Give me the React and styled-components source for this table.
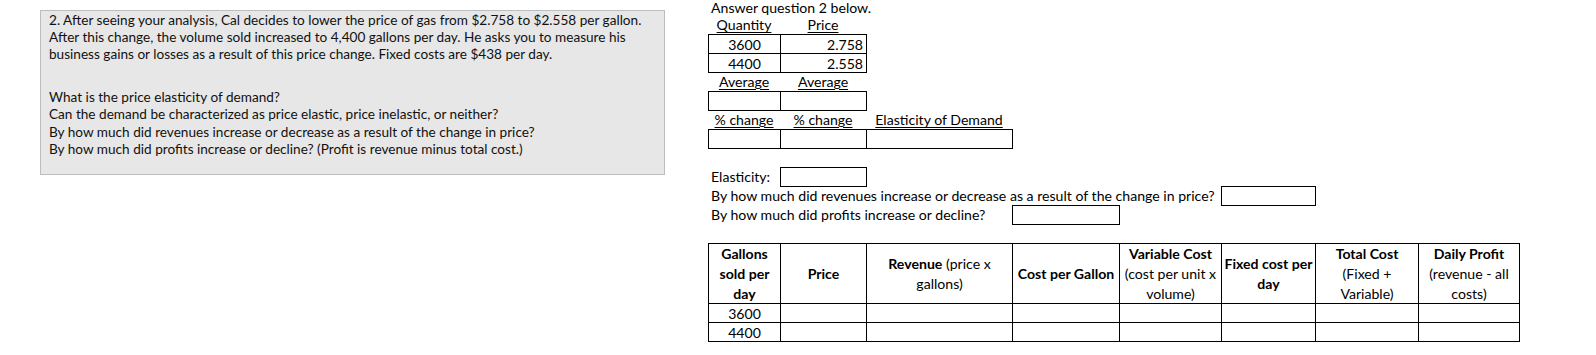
import React from "react";
import styled, { createGlobalStyle, css } from "styled-components";

const Global = createGlobalStyle`
  html, body { margin: 0; padding: 0; background: #fff; }
  body { font-family: Lato, "Liberation Sans", sans-serif; color: #000; }
`;

const Page = styled.div`
  display: flex;
  align-items: flex-start;
  width: 1596px;
  height: 355px;
  overflow: hidden;
`;

const NoteBox = styled.div`
  box-sizing: border-box;
  margin: 10px 0 0 40px;
  width: 625px;
  height: 165px;
  background: #e7e7e7;
  border: 1px solid #bdbdbd;
  padding: 1px 0 0 8px;
  font-size: 13.6px;
  line-height: 17.2px;
  color: #111;
`;

const NoteLine = styled.div`
  white-space: nowrap;
`;

const NoteGap = styled.div`
  height: 25.5px;
`;

const Sheet = styled.div`
  margin-left: 43px;
  display: grid;
  grid-template-columns: 72px 86px 146px 107px 102px 94px 103px 101px;
  grid-template-rows: 15px repeat(12, 19px) 60px 19px 19px;
  font-size: 14.1px;
  line-height: 17px;
`;

const Cell = styled.div`
  grid-column: ${(p) => p.$col} / span ${(p) => p.$span || 1};
  grid-row: ${(p) => p.$row};
  display: flex;
  align-items: ${(p) => (p.$bottom ? "flex-end" : "center")};
  justify-content: ${(p) =>
    p.$align === "right" ? "flex-end" : p.$align === "left" ? "flex-start" : "center"};
  padding: 0 3px;
  white-space: nowrap;
  overflow: visible;
  min-width: 0;
  ${(p) =>
    p.$bottom &&
    css`
      line-height: 14px;
      padding-bottom: 0;
    `}
  ${(p) =>
    p.$boxed &&
    css`
      border: 1px solid #000;
      margin: 0 -1px -1px 0;
    `}
`;

const Under = styled.span`
  text-decoration: underline;
  text-underline-offset: 2px;
  text-decoration-thickness: 1px;
`;

const HeadCell = styled(Cell)`
  flex-direction: column;
  text-align: center;
  line-height: 20px;
  padding: 0 1px;
`;

const HeadLine = styled.div`
  white-space: nowrap;
`;

const Strong = styled.b`
  font-weight: 700;
`;

const noteLines = [
  "2. After seeing your analysis, Cal decides to lower the price of gas from $2.758 to $2.558 per gallon.",
  "After this change, the volume sold increased to 4,400 gallons per day. He asks you to measure his",
  "business gains or losses as a result of this price change. Fixed costs are $438 per day.",
];
const questionLines = [
  "What is the price elasticity of demand?",
  "Can the demand be characterized as price elastic, price inelastic, or neither?",
  "By how much did revenues increase or decrease as a result of the change in price?",
  "By how much did profits increase or decline? (Profit is revenue minus total cost.)",
];

const headers = [
  [<Strong key="a">Gallons</Strong>, <Strong key="b">sold per</Strong>, <Strong key="c">day</Strong>],
  [<Strong key="a">Price</Strong>],
  [<span key="a"><Strong>Revenue</Strong> (price x</span>, <span key="b">gallons)</span>],
  [<Strong key="a">Cost per Gallon</Strong>],
  [<Strong key="a">Variable Cost</Strong>, <span key="b">(cost per unit x</span>, <span key="c">volume)</span>],
  [<Strong key="a">Fixed cost per</Strong>, <Strong key="b">day</Strong>],
  [<Strong key="a">Total Cost</Strong>, <span key="b">(Fixed +</span>, <span key="c">Variable)</span>],
  [<Strong key="a">Daily Profit</Strong>, <span key="b">(revenue - all</span>, <span key="c">costs)</span>],
];

export default function App() {
  return (
    <>
      <Global />
      <Page>
        <NoteBox>
          {noteLines.map((l) => (
            <NoteLine key={l}>{l}</NoteLine>
          ))}
          <NoteGap />
          {questionLines.map((l) => (
            <NoteLine key={l}>{l}</NoteLine>
          ))}
        </NoteBox>

        <Sheet>
          <Cell $col={1} $span={4} $row={1} $align="left" $bottom>
            Answer question 2 below.
          </Cell>

          <Cell $col={1} $row={2}><Under>Quantity</Under></Cell>
          <Cell $col={2} $row={2}><Under>Price</Under></Cell>
          <Cell $col={1} $row={3} $boxed>3600</Cell>
          <Cell $col={2} $row={3} $boxed $align="right">2.758</Cell>
          <Cell $col={1} $row={4} $boxed>4400</Cell>
          <Cell $col={2} $row={4} $boxed $align="right">2.558</Cell>

          <Cell $col={1} $row={5}><Under>Average</Under></Cell>
          <Cell $col={2} $row={5}><Under>Average</Under></Cell>
          <Cell $col={1} $row={6} $boxed />
          <Cell $col={2} $row={6} $boxed />

          <Cell $col={1} $row={7}><Under>% change</Under></Cell>
          <Cell $col={2} $row={7}><Under>% change</Under></Cell>
          <Cell $col={3} $row={7}><Under>Elasticity of Demand</Under></Cell>
          <Cell $col={1} $row={8} $boxed />
          <Cell $col={2} $row={8} $boxed />
          <Cell $col={3} $row={8} $boxed />

          <Cell $col={1} $row={10} $align="left">Elasticity:</Cell>
          <Cell $col={2} $row={10} $boxed />
          <Cell $col={1} $span={5} $row={11} $align="left">
            By how much did revenues increase or decrease as a result of the change in price?
          </Cell>
          <Cell $col={6} $row={11} $boxed />
          <Cell $col={1} $span={3} $row={12} $align="left">
            By how much did profits increase or decline?
          </Cell>
          <Cell $col={4} $row={12} $boxed />

          {headers.map((h, i) => (
            <HeadCell key={`h${i}`} $col={i + 1} $row={14} $boxed>
              {h.map((part, j) => (
                <HeadLine key={j}>{part}</HeadLine>
              ))}
            </HeadCell>
          ))}
          {["3600", "4400"].map((v, r) =>
            headers.map((_, i) => (
              <Cell key={`d${r}-${i}`} $col={i + 1} $row={15 + r} $boxed>
                {i === 0 ? v : null}
              </Cell>
            ))
          )}
        </Sheet>
      </Page>
    </>
  );
}
